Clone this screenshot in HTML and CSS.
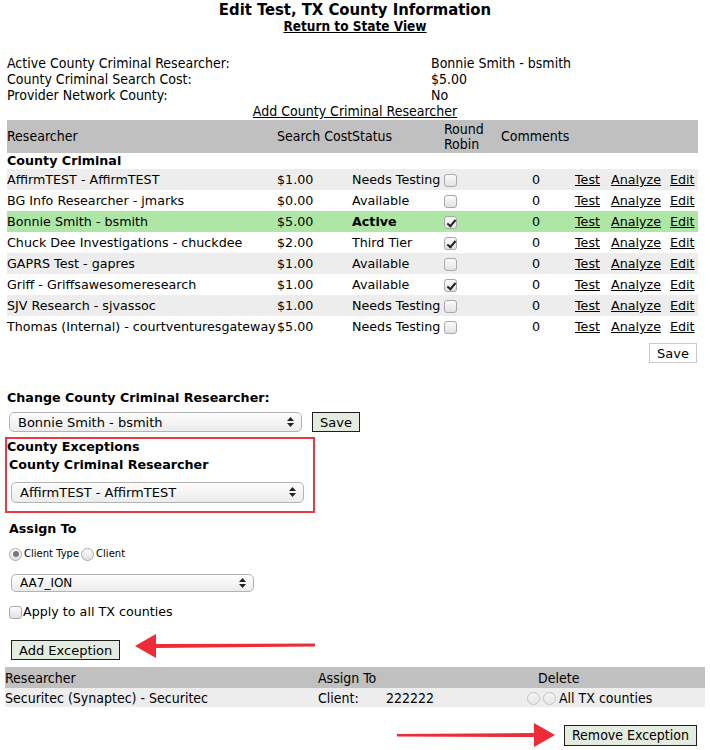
FILE: index.html
```html
<!DOCTYPE html>
<html lang="en">
<head>
    <meta charset="UTF-8">
    <title>Edit Test, TX County Information</title>
    <link rel="stylesheet" href="styles.css">
</head>
<body>
    <div class="page">
        <h1 class="title">Edit Test, TX County Information</h1>
        <div class="back"><a href="#">Return to State View</a></div>

        <div class="info">
            <div>Active County Criminal Researcher:</div><div>Bonnie Smith - bsmith</div>
            <div>County Criminal Search Cost:</div><div>$5.00</div>
            <div>Provider Network County:</div><div>No</div>
        </div>
        <div class="add-link"><a href="#">Add County Criminal Researcher</a></div>

        <table class="researchers">
            <colgroup>
                <col style="width:270px"><col style="width:75px"><col style="width:92px"><col style="width:57px">
                <col style="width:74px"><col style="width:36px"><col style="width:59px"><col>
            </colgroup>
            <thead>
                <tr>
                    <th>Researcher</th><th>Search Cost</th><th>Status</th><th>Round<br>Robin</th><th>Comments</th><th></th><th></th><th></th>
                </tr>
            </thead>
            <tbody>
                <tr class="group"><td colspan="8">County Criminal</td></tr>
                <tr class="alt">
                    <td>AffirmTEST - AffirmTEST</td><td>$1.00</td><td>Needs Testing</td><td><input type="checkbox"></td>
                    <td class="num">0</td><td><a href="#">Test</a></td><td><a href="#">Analyze</a></td><td><a href="#">Edit</a></td>
                </tr>
                <tr>
                    <td>BG Info Researcher - jmarks</td><td>$0.00</td><td>Available</td><td><input type="checkbox"></td>
                    <td class="num">0</td><td><a href="#">Test</a></td><td><a href="#">Analyze</a></td><td><a href="#">Edit</a></td>
                </tr>
                <tr class="active">
                    <td>Bonnie Smith - bsmith</td><td>$5.00</td><td class="bold">Active</td><td><input type="checkbox" checked></td>
                    <td class="num">0</td><td><a href="#">Test</a></td><td><a href="#">Analyze</a></td><td><a href="#">Edit</a></td>
                </tr>
                <tr>
                    <td>Chuck Dee Investigations - chuckdee</td><td>$2.00</td><td>Third Tier</td><td><input type="checkbox" checked></td>
                    <td class="num">0</td><td><a href="#">Test</a></td><td><a href="#">Analyze</a></td><td><a href="#">Edit</a></td>
                </tr>
                <tr class="alt">
                    <td>GAPRS Test - gapres</td><td>$1.00</td><td>Available</td><td><input type="checkbox"></td>
                    <td class="num">0</td><td><a href="#">Test</a></td><td><a href="#">Analyze</a></td><td><a href="#">Edit</a></td>
                </tr>
                <tr>
                    <td>Griff - Griffsawesomeresearch</td><td>$1.00</td><td>Available</td><td><input type="checkbox" checked></td>
                    <td class="num">0</td><td><a href="#">Test</a></td><td><a href="#">Analyze</a></td><td><a href="#">Edit</a></td>
                </tr>
                <tr class="alt">
                    <td>SJV Research - sjvassoc</td><td>$1.00</td><td>Needs Testing</td><td><input type="checkbox"></td>
                    <td class="num">0</td><td><a href="#">Test</a></td><td><a href="#">Analyze</a></td><td><a href="#">Edit</a></td>
                </tr>
                <tr>
                    <td>Thomas (Internal) - courtventuresgateway</td><td>$5.00</td><td>Needs Testing</td><td><input type="checkbox"></td>
                    <td class="num">0</td><td><a href="#">Test</a></td><td><a href="#">Analyze</a></td><td><a href="#">Edit</a></td>
                </tr>
            </tbody>
        </table>
        <div class="table-actions"><button class="btn-plain">Save</button></div>

        <div class="change">
            <div class="label">Change County Criminal Researcher:</div>
            <div class="change-row">
                <div class="select-wrap wide">
                    <select><option>Bonnie Smith - bsmith</option></select>
                    <svg class="arrows" width="7" height="10" viewBox="0 0 7 10"><path d="M3.5 0 L7 4 H0 Z M3.5 10 L7 6 H0 Z" fill="#222"/></svg>
                </div>
                <button class="btn-green">Save</button>
            </div>
        </div>

        <div class="exceptions">
            <div class="label">County Exceptions</div>
            <div class="label sub">County Criminal Researcher</div>
            <div class="select-wrap wide">
                <select><option>AffirmTEST - AffirmTEST</option></select>
                <svg class="arrows" width="7" height="10" viewBox="0 0 7 10"><path d="M3.5 0 L7 4 H0 Z M3.5 10 L7 6 H0 Z" fill="#222"/></svg>
            </div>
        </div>

        <div class="assign">
            <div class="label">Assign To</div>
            <div class="radios">
                <label><input type="radio" name="t" checked>Client Type</label>
                <label><input type="radio" name="t">Client</label>
            </div>
            <div class="select-wrap small">
                <select><option>AA7_ION</option></select>
                <svg class="arrows" width="7" height="10" viewBox="0 0 7 10"><path d="M3.5 0 L7 4 H0 Z M3.5 10 L7 6 H0 Z" fill="#222"/></svg>
            </div>
            <label class="apply"><input type="checkbox">Apply to all TX counties</label>
            <div class="add-row">
                <button class="btn-green">Add Exception</button>
                <svg class="arrow arrow-left" width="182" height="26" viewBox="0 0 182 26">
                    <path d="M181 10.5 L22 11 L22 1 L1 13 L22 25 L22 15 L181 13.5 Z" fill="#ee2b36"/>
                </svg>
            </div>
        </div>

        <table class="exc-table">
            <colgroup>
                <col style="width:313px"><col style="width:68px"><col style="width:141px"><col>
            </colgroup>
            <thead>
                <tr><th>Researcher</th><th colspan="2">Assign To</th><th class="del">Delete</th></tr>
            </thead>
            <tbody>
                <tr>
                    <td>Securitec (Synaptec) - Securitec</td><td>Client:</td><td>222222</td>
                    <td><input type="radio" name="d"><input type="radio" name="d">All TX counties</td>
                </tr>
            </tbody>
        </table>

        <div class="remove-row">
            <svg class="arrow arrow-right" width="160" height="26" viewBox="0 0 160 26">
                <path d="M0 12 L137 11 L137 1 L158 13 L137 25 L137 15 L0 14.5 Z" fill="#ee2b36"/>
            </svg>
            <button class="btn-green">Remove Exception</button>
        </div>
    </div>
</body>
</html>
```

FILE: styles.css
```css
body {
    margin: 0;
    background-color: #ffffff;
    color: #000000;
    font-family: "DejaVu Sans", Verdana, sans-serif;
    font-size: 12.7px;
}

a {
    color: #000000;
}

.page {
    width: 710px;
}

.title {
    margin: 0;
    padding-top: 1px;
    font-family: "DejaVu Sans Condensed", "DejaVu Sans", sans-serif;
    font-size: 16.5px;
    line-height: 17px;
    text-align: center;
}

.back {
    font-family: "DejaVu Sans Condensed", "DejaVu Sans", sans-serif;
    font-weight: bold;
    font-size: 13.5px;
    line-height: 16px;
    text-align: center;
}

.info {
    display: grid;
    grid-template-columns: 424px 1fr;
    margin: 21px 0 0 7px;
    font-family: "DejaVu Sans Condensed", "DejaVu Sans", sans-serif;
    font-size: 14px;
    line-height: 16px;
}

.add-link {
    font-family: "DejaVu Sans Condensed", "DejaVu Sans", sans-serif;
    font-size: 14px;
    line-height: 16px;
    text-align: center;
}

.researchers {
    margin: 1px 0 0 7px;
    width: 691px;
    border-collapse: collapse;
    table-layout: fixed;
}

.researchers th {
    background-color: #c0c0c0;
    font-family: "DejaVu Sans Condensed", "DejaVu Sans", sans-serif;
    font-weight: normal;
    font-size: 14px;
    line-height: 15px;
    text-align: left;
    height: 33px;
    padding: 0;
    white-space: nowrap;
}

.researchers td {
    padding: 0;
    height: 21px;
    white-space: nowrap;
    overflow: visible;
}

.researchers .group td {
    font-weight: bold;
    height: 16px;
    line-height: 16px;
}

.researchers .alt td {
    background-color: #ededed;
}

.researchers .active td {
    background-color: #aee7a5;
}

.researchers .bold {
    font-weight: bold;
}

.researchers .num {
    text-align: center;
    padding-right: 4px;
}

input[type="checkbox"],
input[type="radio"] {
    appearance: none;
    margin: 0;
    width: 13px;
    height: 13px;
    border: 1px solid #a9a9a9;
    background: linear-gradient(#fbfbfb, #e2e2e2);
    vertical-align: middle;
    position: relative;
}

input[type="checkbox"] {
    border-radius: 3px;
}

input[type="checkbox"]:checked::after {
    content: "";
    position: absolute;
    left: 4px;
    top: 1px;
    width: 3px;
    height: 7px;
    border: solid #222;
    border-width: 0 2px 2px 0;
    transform: rotate(40deg);
}

input[type="radio"] {
    border-radius: 50%;
}

input[type="radio"]:checked::after {
    content: "";
    position: absolute;
    left: 2.5px;
    top: 2.5px;
    width: 6px;
    height: 6px;
    border-radius: 50%;
    background-color: #777;
}

.table-actions {
    display: flex;
    justify-content: flex-end;
    padding: 6px 13px 0 0;
}

button {
    font-family: "DejaVu Sans", Verdana, sans-serif;
    font-size: 13px;
    color: #000000;
    cursor: pointer;
}

.btn-plain {
    background-color: #ffffff;
    border: 1px solid #c9c9c9;
    height: 20px;
    padding: 0 7px;
}

.btn-green {
    background-color: #e3ecde;
    border: 1px solid #1f1f1f;
    height: 20px;
    padding: 0 7px;
}

.label {
    font-weight: bold;
    line-height: 16px;
}

.change {
    margin: 27px 0 0 7px;
}

.change-row {
    display: flex;
    align-items: center;
    gap: 10px;
    margin: 6px 0 0 2px;
}

.select-wrap {
    position: relative;
    display: inline-block;
}

.select-wrap select {
    appearance: none;
    font-family: "DejaVu Sans", Verdana, sans-serif;
    font-size: 13px;
    color: #000000;
    height: 20px;
    border: 1px solid #b3b3b3;
    border-radius: 5px;
    background: linear-gradient(#fdfdfd, #ececec);
    padding: 0 8px;
}

.select-wrap .arrows {
    position: absolute;
    right: 8px;
    top: 5px;
    pointer-events: none;
}

.wide select {
    width: 293px;
}

.exceptions {
    margin: 5px 0 0 5px;
    width: 306px;
    height: 72px;
    border: 2px solid #ec3a44;
}

.exceptions .sub {
    margin: 2px 0 0 2px;
}

.exceptions .select-wrap {
    margin: 9px 0 0 4px;
}

.exceptions .select-wrap select {
    height: 21px;
}

.assign {
    margin: 8px 0 0 9px;
}

.radios {
    display: flex;
    gap: 2px;
    margin-top: 9px;
    font-size: 10px;
    line-height: 16px;
}

.radios label {
    display: flex;
    align-items: center;
    gap: 2px;
}

.small {
    margin: 12px 0 0 2px;
}

.small select {
    width: 243px;
    height: 18px;
    font-size: 12px;
}

.small .arrows {
    top: 4px;
}

.apply {
    display: flex;
    align-items: center;
    gap: 1px;
    margin-top: 12px;
    line-height: 16px;
}

.add-row {
    display: flex;
    align-items: center;
    margin: 20px 0 0 2px;
}

.arrow-left {
    margin-left: 14px;
    margin-top: -8px;
}

.exc-table {
    margin: 7px 0 0 5px;
    width: 700px;
    border-collapse: collapse;
    table-layout: fixed;
    font-family: "DejaVu Sans Condensed", "DejaVu Sans", sans-serif;
    font-size: 14px;
}

.exc-table th {
    background-color: #c0c0c0;
    font-weight: normal;
    text-align: left;
    height: 21px;
    padding: 0;
}

.exc-table th.del {
    padding-left: 11px;
}

.exc-table td {
    background-color: #ededed;
    height: 19px;
    padding: 0;
    white-space: nowrap;
}

.exc-table td input {
    margin-right: 3px;
    opacity: 0.6;
}

.remove-row {
    display: flex;
    align-items: center;
    justify-content: flex-end;
    padding: 15px 13px 0 0;
}

.remove-row .btn-green {
    font-family: "DejaVu Sans Condensed", "DejaVu Sans", sans-serif;
    font-size: 14px;
    height: 21px;
    margin-left: 7px;
}
```
